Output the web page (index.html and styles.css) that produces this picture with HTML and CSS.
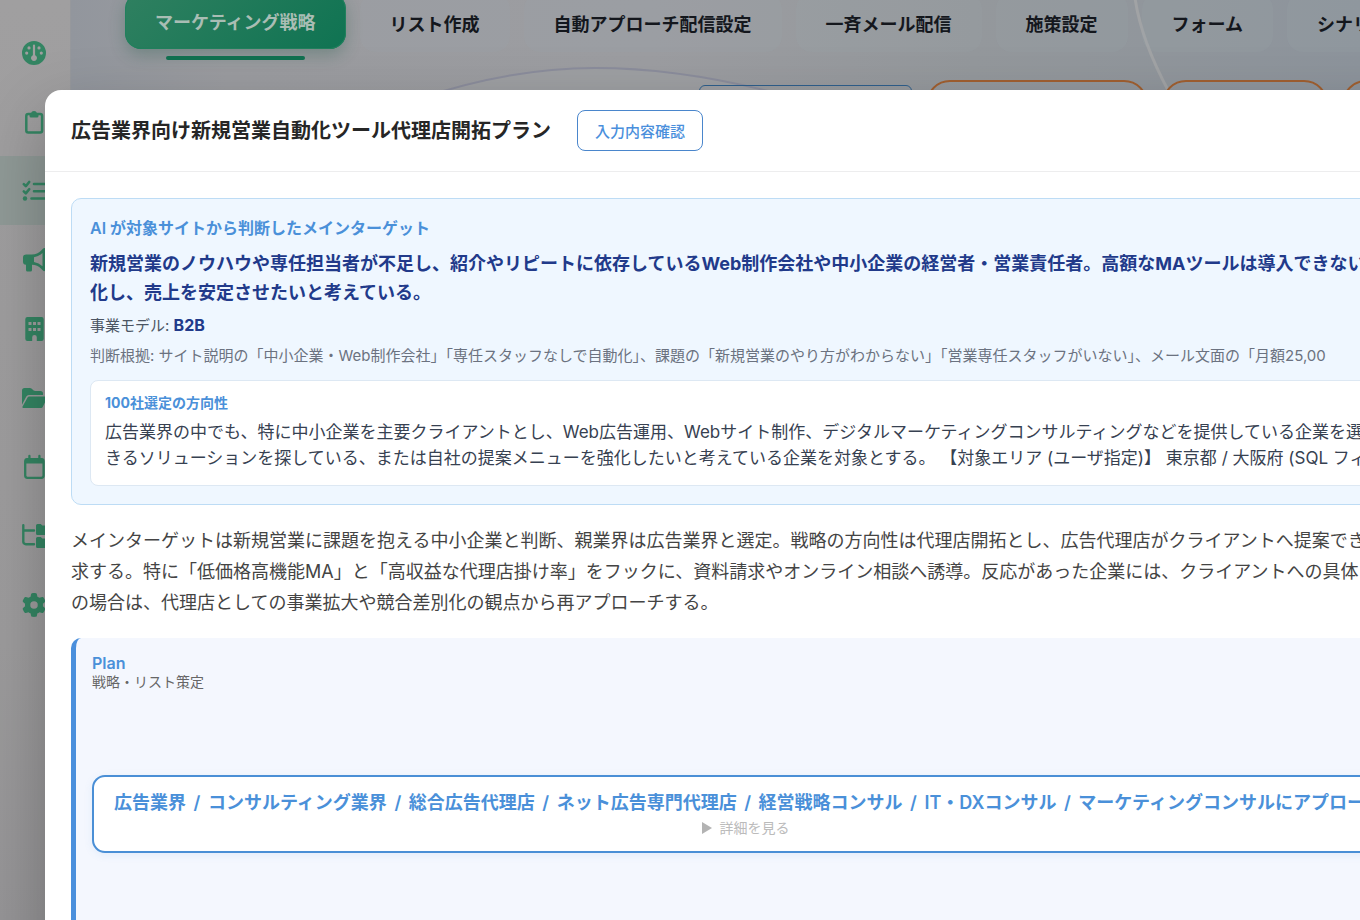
FILE: index.html
```html
<!DOCTYPE html>
<html lang="ja">
<head>
    <meta charset="UTF-8">
    <meta name="viewport" content="width=device-width, initial-scale=1.0">
    <title>マーケティング戦略</title>
    <link rel="stylesheet" href="styles.css">
</head>
<body>
    <div class="app">
        <nav class="sidebar">
            <a class="side-item" href="#">
                <svg class="icon" viewBox="0 0 24 24">
                    <path fill-rule="evenodd" d="M12 0a12 12 0 1 0 0 24a12 12 0 1 0 0-24zM12 3.500a1.100 1.100 0 0 1 1.100 1.100v9.600a3 3 0 1 1-2.200 0V4.600A1.100 1.100 0 0 1 12 3.500zM7 5.300a1.600 1.600 0 1 1 0 3.200a1.600 1.600 0 1 1 0-3.200zM17 5.300a1.600 1.600 0 1 1 0 3.200a1.600 1.600 0 1 1 0-3.200zM4.700 10.500a1.600 1.600 0 1 1 0 3.200a1.600 1.600 0 1 1 0-3.200zM19.300 10.500a1.600 1.600 0 1 1 0 3.200a1.600 1.600 0 1 1 0-3.200z"/>
                </svg>
            </a>
            <a class="side-item" href="#">
                <svg class="icon" viewBox="0 0 24 24">
                    <rect x="4.300" y="4" width="15.800" height="18.600" rx="2" fill="none" stroke="currentColor" stroke-width="2.500"/>
                    <path d="M7.500 3.200H9a3.100 3.100 0 0 1 6 0h1.500V6a1.500 1.500 0 0 1-1.500 1.500H9A1.500 1.500 0 0 1 7.500 6z"/>
                </svg>
            </a>
            <a class="side-item active" href="#">
                <svg class="icon" viewBox="0 0 24 24">
                    <path d="M1.800 5.200l2 2L7.200 3M1.800 12.400l2 2 3.400-4.200M12 5H24M12 12.200H24M9.500 19.500H24" fill="none" stroke="currentColor" stroke-width="2.600" stroke-linecap="round" stroke-linejoin="round"/>
                    <circle cx="3" cy="19.500" r="2.200"/>
                </svg>
            </a>
            <a class="side-item" href="#">
                <svg class="icon" viewBox="0 0 24 24">
                    <path fill-rule="evenodd" d="M23.500 1.200v8a2.900 2.900 0 0 1 0 5v7.600a1.300 1.300 0 0 1-2.300.9l-2-2a13 13 0 0 0-9.200-3.900V22a1.500 1.500 0 0 1-1.500 1.500h-3A1.500 1.500 0 0 1 4 22v-5.200a3 3 0 0 1-3-3V9.400a3 3 0 0 1 3-3h6a13 13 0 0 0 9.200-3.900l2-2a1.300 1.300 0 0 1 2.300.7zM20.500 5a16 16 0 0 1-8.500 4.200v4.800a16 16 0 0 1 8.500 4.200z"/>
                </svg>
            </a>
            <a class="side-item" href="#">
                <svg class="icon" viewBox="0 0 24 24">
                    <path fill-rule="evenodd" d="M5.500 0h14a2.200 2.200 0 0 1 2.200 2.200v19.600A2.200 2.200 0 0 1 19.500 24h-4.700v-3.700a2.300 2.300 0 0 0-4.600 0V24H5.500a2.200 2.200 0 0 1-2.200-2.200V2.200A2.200 2.200 0 0 1 5.500 0zM6.500 5v3h3V5zM11 5v3h3V5zM15.500 5v3h3V5zM6.500 11v3h3v-3zM11 11v3h3v-3zM15.500 11v3h3v-3z"/>
                </svg>
            </a>
            <a class="side-item" href="#">
                <svg class="icon" viewBox="0 0 24 24">
                    <path d="M4.300 10.600L0 18.800V4.500a2.500 2.500 0 0 1 2.500-2.500h5.300a3 3 0 0 1 2 .8l1.500 1.400a3 3 0 0 0 2 .8h5.200A2.500 2.500 0 0 1 21 7.500V9H7a3 3 0 0 0-2.700 1.600zM5.700 11.300A1.700 1.700 0 0 1 7.200 10.500H24a1.200 1.200 0 0 1 1 1.800l-4.300 8.700a1.700 1.700 0 0 1-1.500 1H1.500a1 1 0 0 1-.9-1.600z"/>
                </svg>
            </a>
            <a class="side-item" href="#">
                <svg class="icon" viewBox="0 0 24 24">
                    <rect x="3.200" y="4.200" width="18.400" height="18.600" rx="2.200" fill="none" stroke="currentColor" stroke-width="2.300"/>
                    <path d="M3.200 5.600A2.400 2.400 0 0 1 5.600 3.200h13.600a2.400 2.400 0 0 1 2.400 2.400v3H3.200z"/>
                    <path d="M7.400 1v4M17.400 1v4" stroke="currentColor" stroke-width="2.300" stroke-linecap="round"/>
                </svg>
            </a>
            <a class="side-item" href="#">
                <svg class="icon" viewBox="0 0 24 24">
                    <path d="M1.300 1.200v16.500a2.500 2.500 0 0 0 2.500 2.500H12M1.300 6.500H12" fill="none" stroke="currentColor" stroke-width="2.400" stroke-linecap="round"/>
                    <path d="M15.500 0h3.300l1.500 1.500h5.200A1.500 1.500 0 0 1 27 3v6.500a1.500 1.500 0 0 1-1.500 1.500h-10A1.500 1.500 0 0 1 14 9.500v-8A1.500 1.500 0 0 1 15.500 0zM15.500 13h3.300l1.500 1.500h5.200A1.500 1.500 0 0 1 27 16v6.500a1.500 1.500 0 0 1-1.500 1.500h-10a1.500 1.500 0 0 1-1.500-1.500v-8a1.500 1.500 0 0 1 1.500-1.500z"/>
                </svg>
            </a>
            <a class="side-item" href="#">
                <svg class="icon" viewBox="0 0 512 512">
                    <path d="M495.900 166.600c3.200 8.700 .5 18.400-6.400 24.600l-43.300 39.400c1.100 8.300 1.700 16.800 1.700 25.400s-.6 17.100-1.700 25.400l43.300 39.400c6.900 6.200 9.600 15.900 6.400 24.600c-4.400 11.900-9.700 23.300-15.800 34.300l-4.700 8.100c-6.600 11-14 21.400-22.100 31.200c-5.900 7.200-15.700 9.600-24.500 6.800l-55.700-17.700c-13.400 10.300-28.200 18.900-44 25.400l-12.500 57.100c-2 9.100-9 16.300-18.200 17.800c-13.800 2.300-28 3.500-42.500 3.500s-28.700-1.200-42.500-3.500c-9.200-1.500-16.200-8.700-18.200-17.800l-12.500-57.100c-15.800-6.500-30.600-15.100-44-25.400L83.100 425.900c-8.800 2.800-18.600 .3-24.500-6.800c-8.100-9.800-15.500-20.200-22.100-31.200l-4.700-8.100c-6.100-11-11.400-22.400-15.800-34.300c-3.200-8.700-.5-18.400 6.400-24.600l43.300-39.400C64.600 273.100 64 264.600 64 256s.6-17.100 1.700-25.400L22.400 191.200c-6.900-6.200-9.600-15.900-6.400-24.600c4.400-11.900 9.700-23.300 15.800-34.300l4.700-8.100c6.600-11 14-21.400 22.100-31.200c5.900-7.200 15.700-9.600 24.500-6.800l55.700 17.700c13.400-10.300 28.200-18.900 44-25.400l12.500-57.100c2-9.100 9-16.300 18.200-17.800C227.300 1.200 241.500 0 256 0s28.700 1.200 42.500 3.500c9.200 1.500 16.200 8.700 18.200 17.800l12.500 57.100c15.800 6.500 30.600 15.100 44 25.400l55.700-17.700c8.800-2.800 18.600-.3 24.500 6.800c8.100 9.800 15.500 20.200 22.100 31.200l4.700 8.100c6.100 11 11.400 22.400 15.800 34.300zM256 336a80 80 0 1 0 0-160 80 80 0 1 0 0 160z"/>
                </svg>
            </a>
        </nav>

        <main class="main">
            <svg class="swirl" viewBox="0 0 1289 120" preserveAspectRatio="xMinYMin slice">
                <path d="M350 98Q440 68 524 68T705 93V120H350z" fill="#a3a4a8" opacity=".4"/>
                <path d="M350 98Q440 68 524 68T705 93" fill="none" stroke="#8b8d9c" stroke-width="2"/>
                <path d="M1064 -2Q1070 40 1098 92" fill="none" stroke="#a1a3a5" stroke-width="3"/>
            </svg>
            <div class="tabs">
                <button class="tab active">マーケティング戦略</button>
                <button class="tab">リスト作成</button>
                <button class="tab">自動アプローチ配信設定</button>
                <button class="tab">一斉メール配信</button>
                <button class="tab">施策設定</button>
                <button class="tab">フォーム</button>
                <button class="tab">シナリオ</button>
            </div>
            <div class="chips">
                <div class="chip chip-blue"></div>
                <div class="chip"></div>
                <div class="chip chip-small"></div>
                <div class="chip"></div>
            </div>
        </main>
    </div>

    <div class="modal">
        <div class="modal-header">
            <h2 class="modal-title">広告業界向け新規営業自動化ツール代理店開拓プラン</h2>
            <button class="confirm-btn">入力内容確認</button>
        </div>
        <div class="modal-body">
            <section class="target-box">
                <h3 class="target-label">AI が対象サイトから判断したメインターゲット</h3>
                <p class="target-main">新規営業のノウハウや専任担当者が不足し、紹介やリピートに依存しているWeb制作会社や中小企業の経営者・営業責任者。高額なMAツールは導入できない<br>化し、売上を安定させたいと考えている。</p>
                <p class="target-model">事業モデル: <strong>B2B</strong></p>
                <p class="target-reason">判断根拠: サイト説明の「中小企業・Web制作会社」「専任スタッフなしで自動化」、課題の「新規営業のやり方がわからない」「営業専任スタッフがいない」、メール文面の「月額25,00</p>
                <div class="direction">
                    <h4 class="direction-title">100社選定の方向性</h4>
                    <p class="direction-text">広告業界の中でも、特に中小企業を主要クライアントとし、Web広告運用、Webサイト制作、デジタルマーケティングコンサルティングなどを提供している企業を選定。<br>きるソリューションを探している、または自社の提案メニューを強化したいと考えている企業を対象とする。 【対象エリア (ユーザ指定)】 東京都 / 大阪府 (SQL フィル</p>
                </div>
            </section>

            <p class="summary">メインターゲットは新規営業に課題を抱える中小企業と判断、親業界は広告業界と選定。戦略の方向性は代理店開拓とし、広告代理店がクライアントへ提案でき<br>求する。特に「低価格高機能MA」と「高収益な代理店掛け率」をフックに、資料請求やオンライン相談へ誘導。反応があった企業には、クライアントへの具体<br>の場合は、代理店としての事業拡大や競合差別化の観点から再アプローチする。</p>

            <section class="plan">
                <h3 class="plan-title">Plan</h3>
                <p class="plan-sub">戦略・リスト策定</p>
                <div class="plan-card">
                    <h4 class="plan-card-title">広告業界 <span class="sep">/</span> コンサルティング業界 <span class="sep">/</span> 総合広告代理店 <span class="sep">/</span> ネット広告専門代理店 <span class="sep">/</span> 経営戦略コンサル <span class="sep">/</span> IT・DXコンサル <span class="sep">/</span> マーケティングコンサルにアプロー</h4>
                    <button class="detail-btn">
                        <svg class="detail-arrow" viewBox="0 0 10 12"><path d="M0 0L10 6L0 12z"/></svg>
                        詳細を見る
                    </button>
                </div>
            </section>
        </div>
    </div>
</body>
</html>
```
FILE: styles.css
```css
* {
    box-sizing: border-box;
}
body {
    margin: 0;
    height: 100vh;
    overflow: hidden;
    font-family: Inter, "Noto Sans CJK JP", sans-serif;
    background-color: #97999c;
    color: #333;
}
h2, h3, h4, p {
    margin: 0;
}
button {
    font-family: inherit;
    cursor: pointer;
}

/* Page behind the modal */
.app {
    display: flex;
    height: 100vh;
}
.sidebar {
    display: flex;
    flex-direction: column;
    width: 71px;
    flex-shrink: 0;
    padding-top: 18px;
    background: linear-gradient(to bottom, #a09fa0, #9c9b9c 70%, #959496);
    border-right: 1px solid #96989c;
}
.side-item {
    display: flex;
    align-items: center;
    height: 69px;
    padding-left: 22px;
    color: #348563;
}
.side-item.active {
    background-color: #8f9996;
}
.icon {
    width: 24px;
    height: 24px;
    fill: currentColor;
    overflow: visible;
}
.main {
    position: relative;
    flex: 1;
    min-width: 0;
    overflow: hidden;
    background: linear-gradient(to right, #92969d, #9b9ca0 12%, #9c9da1 45%, #94989c 70%, #8d949c);
}
.swirl {
    position: absolute;
    top: 0;
    left: 0;
    width: 1289px;
    height: 120px;
}
.tabs {
    position: relative;
    display: flex;
    align-items: flex-start;
    gap: 14px;
    margin: -7px 0 0 54px;
}
.tab {
    position: relative;
    flex-shrink: 0;
    height: 59px;
    padding: 0 30px;
    border: none;
    border-radius: 16px;
    background-color: rgba(155, 166, 172, 0.18);
    color: #14171d;
    font-size: 18px;
    font-weight: 600;
}
.tab.active {
    height: 56px;
    background: linear-gradient(135deg, #2f8060, #0f7352);
    box-shadow: inset 0 0 0 1px #21805d, 0 6px 16px rgba(30, 90, 70, 0.3);
    color: #a9bdb4;
    font-weight: 700;
}
.tab.active::after {
    content: "";
    position: absolute;
    left: 41px;
    right: 41px;
    bottom: -11px;
    height: 4px;
    border-radius: 2px;
    background-color: #117050;
}
.chips {
    position: relative;
    display: flex;
    align-items: flex-end;
    gap: 14px;
    padding: 28px 0 0 628px;
}
.chip {
    flex-shrink: 0;
    width: 222px;
    height: 56px;
    border: 2px solid #a05f30;
    border-radius: 24px;
}
.chip-blue {
    width: 213px;
    height: 51px;
    border: 1px solid #2e5f8c;
    border-radius: 6px;
}
.chip-small {
    width: 166px;
}

/* Modal */
.modal {
    position: absolute;
    top: 90px;
    left: 45px;
    width: 103vw;
    height: 100vh;
    overflow: hidden;
    border-radius: 16px;
    background-color: #fff;
    box-shadow: 0 24px 64px rgba(0, 0, 0, 0.25);
}
.modal-header {
    display: flex;
    align-items: center;
    gap: 26px;
    padding: 20px 26px;
    border-bottom: 1px solid #ededee;
}
.modal-title {
    font-size: 20px;
    line-height: 40px;
    font-weight: 600;
    color: #262626;
}
.confirm-btn {
    height: 41px;
    padding: 0 17px;
    border: 1px solid #4a86cc;
    border-radius: 8px;
    background-color: #fff;
    color: #4a8fdc;
    font-size: 15px;
    font-weight: 500;
}
.modal-body {
    padding: 26px;
}
.target-box {
    padding: 18px;
    border: 1px solid #bddcf5;
    border-radius: 10px;
    background-color: #eff7ff;
    white-space: nowrap;
}
.target-label {
    margin-bottom: 10px;
    font-size: 16px;
    line-height: 22px;
    font-weight: 600;
    color: #4a90d9;
}
.target-main {
    margin-bottom: 6px;
    font-size: 18px;
    line-height: 29px;
    font-weight: 700;
    color: #213a8a;
}
.target-model,
.target-reason {
    font-size: 15px;
    line-height: 24px;
    color: #4b5563;
}
.target-model {
    margin-bottom: 6px;
}
.target-model strong {
    font-size: 16px;
    color: #213a8a;
}
.target-reason {
    margin-bottom: 12px;
    color: #6b7280;
}
.direction {
    padding: 10px 14px 14px;
    border: 1px solid #dde8f3;
    border-radius: 8px;
    background-color: #fff;
    overflow: hidden;
}
.direction-title {
    margin-bottom: 4px;
    font-size: 14px;
    line-height: 24px;
    font-weight: 700;
    color: #4a90d9;
}
.direction-text {
    font-size: 17px;
    line-height: 26px;
    color: #374151;
}
.summary {
    margin: 20px 0;
    font-size: 18px;
    line-height: 31px;
    color: #444;
    white-space: nowrap;
}
.plan {
    height: 360px;
    padding: 15px 20px 15px 16px;
    border-left: 5px solid #4a8fdc;
    border-radius: 10px;
    background-color: #f4f7fe;
}
.plan-title {
    font-size: 16px;
    line-height: 20px;
    font-weight: 600;
    color: #4a90d9;
}
.plan-sub {
    font-size: 14px;
    line-height: 18px;
    color: #666;
}
.plan-card {
    margin-top: 84px;
    padding: 14px 20px 10px;
    border: 2px solid #4a8fd6;
    border-radius: 13px;
    background-color: #fff;
    box-shadow: 0 2px 8px rgba(74, 144, 217, 0.1);
}
.plan-card-title {
    font-size: 18px;
    line-height: 24px;
    font-weight: 600;
    color: #4a90d9;
    white-space: nowrap;
}
.sep {
    margin: 0 3px;
}
.detail-btn {
    display: flex;
    align-items: center;
    justify-content: center;
    gap: 7px;
    width: 100%;
    padding: 0;
    border: none;
    background: none;
    font-size: 14px;
    line-height: 26px;
    color: #bbb;
}
.detail-arrow {
    width: 10px;
    height: 12px;
    fill: #b3b3b3;
}
```
